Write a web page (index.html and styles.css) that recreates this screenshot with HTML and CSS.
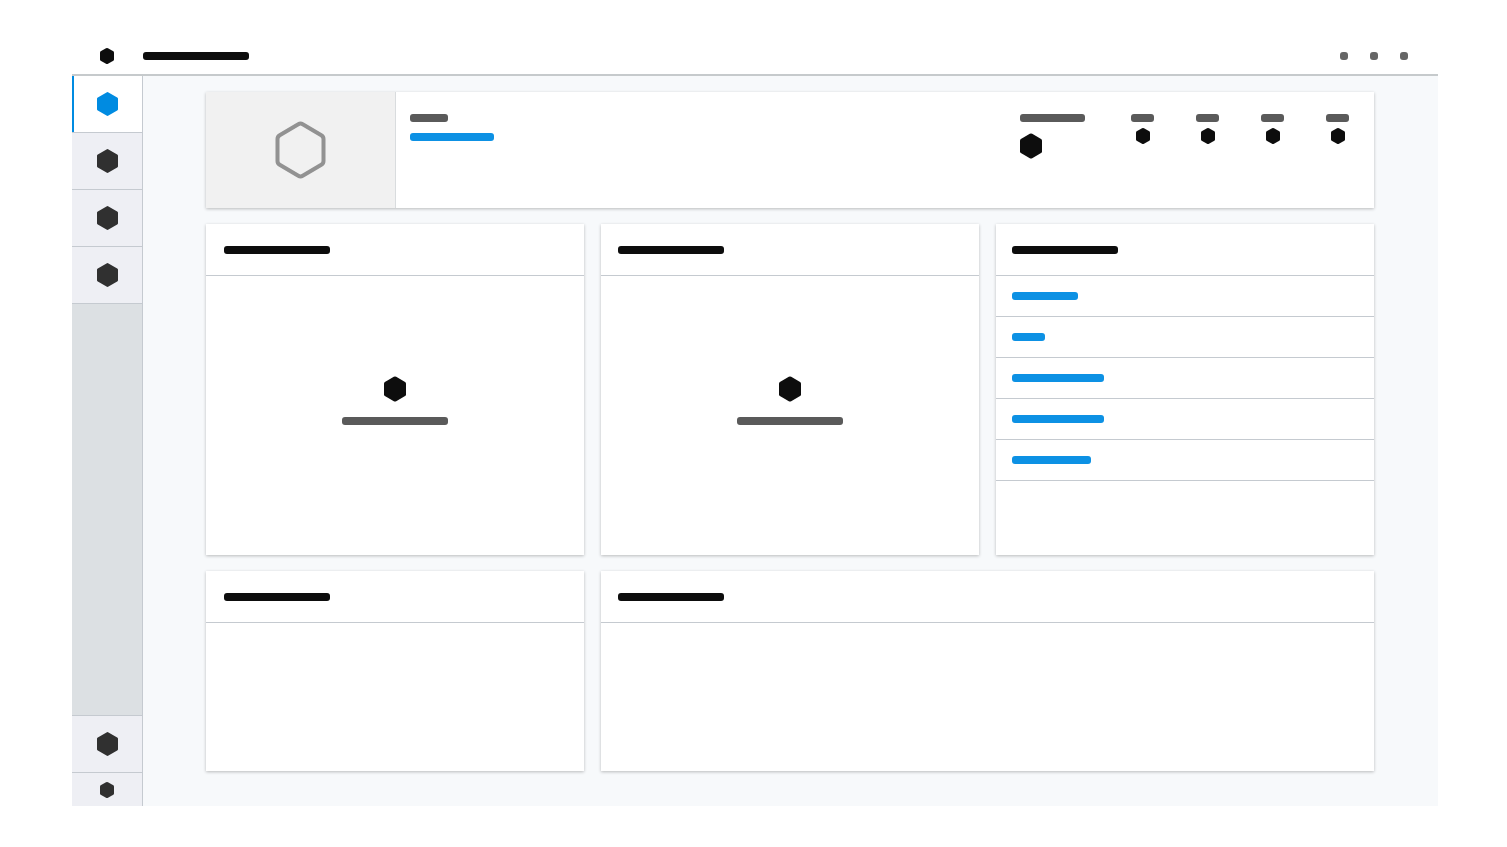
FILE: index.html
```html
<!DOCTYPE html>
<html lang="en">
<head>
<meta charset="utf-8">
<title>Dashboard wireframe</title>
<meta name="viewport" content="width=device-width, initial-scale=1">
<link rel="stylesheet" href="styles.css">
</head>
<body>
<svg class="sprite" aria-hidden="true">
  <symbol id="hex-s" viewBox="0 0 14 16"><path d="M6 .3Q7-.2 8 .3L13.300 3.300Q14 3.700 14 4.600V11.400Q14 12.300 13.300 12.700L8 15.700Q7 16.200 6 15.700L.7 12.700Q0 12.300 0 11.400V4.600Q0 3.700.7 3.300Z"/></symbol>
  <symbol id="hex-m" viewBox="0 0 22 24"><path d="M10.500.4Q11.500-.2 12.500.4L21.200 5.400Q22 5.900 22 6.800V17.200Q22 18.100 21.200 18.600L12.500 23.600Q11.500 24.200 10.500 23.600L1.800 18.600Q1 18.100 1 17.200V6.800Q1 5.900 1.800 5.400Z"/></symbol>
  <symbol id="hex-l" viewBox="0 0 22 26"><path d="M9.800.8Q11 .1 12.200.8L21.100 6Q22 6.600 22 7.600V18.400Q22 19.400 21.100 20L12.200 25.200Q11 25.900 9.800 25.200L.9 20Q0 19.400 0 18.400V7.600Q0 6.600.9 6Z"/></symbol>
</svg>
<div class="app">
  <header class="topbar">
    <a class="topbar-logo" href="#" aria-label="Home"><svg class="hex-s"><use href="#hex-s"/></svg></a>
    <span class="bar bar-title"></span>
    <div class="topbar-actions">
      <button class="dot" type="button" aria-label="Search"></button>
      <button class="dot" type="button" aria-label="Help"></button>
      <button class="dot" type="button" aria-label="Account"></button>
    </div>
  </header>
  <div class="workspace">
    <nav class="sidebar" aria-label="Main">
      <a class="side-item side-item-active" href="#" aria-label="Overview" aria-current="page"><svg class="hex-m"><use href="#hex-m"/></svg></a>
      <a class="side-item" href="#" aria-label="Section 2"><svg class="hex-m"><use href="#hex-m"/></svg></a>
      <a class="side-item" href="#" aria-label="Section 3"><svg class="hex-m"><use href="#hex-m"/></svg></a>
      <a class="side-item" href="#" aria-label="Section 4"><svg class="hex-m"><use href="#hex-m"/></svg></a>
      <div class="side-fill"></div>
      <a class="side-item" href="#" aria-label="Settings"><svg class="hex-m"><use href="#hex-m"/></svg></a>
      <button class="side-toggle" type="button" aria-label="Collapse"><svg class="hex-s"><use href="#hex-s"/></svg></button>
    </nav>
    <main class="content">
      <section class="card summary">
        <div class="summary-media">
          <svg class="hex-outline" viewBox="0 0 51 58"><path d="M23.300 3.200Q25.500 1.900 27.700 3.200L46.300 14.200Q48.500 15.500 48.500 18V40Q48.500 42.500 46.300 43.800L27.700 54.800Q25.500 56.100 23.300 54.800L4.700 43.800Q2.500 42.500 2.500 40V18Q2.500 15.500 4.700 14.200Z"/></svg>
        </div>
        <div class="summary-text">
          <span class="bar bar-grey w-38"></span>
          <a class="bar bar-link w-84" href="#" aria-label="Details"></a>
        </div>
        <div class="summary-status">
          <span class="bar bar-grey w-65"></span>
          <svg class="hex-l"><use href="#hex-l"/></svg>
        </div>
        <div class="metrics">
          <div class="metric"><span class="bar bar-grey w-23"></span><svg class="hex-s"><use href="#hex-s"/></svg></div>
          <div class="metric"><span class="bar bar-grey w-23"></span><svg class="hex-s"><use href="#hex-s"/></svg></div>
          <div class="metric"><span class="bar bar-grey w-23"></span><svg class="hex-s"><use href="#hex-s"/></svg></div>
          <div class="metric"><span class="bar bar-grey w-23"></span><svg class="hex-s"><use href="#hex-s"/></svg></div>
        </div>
      </section>
      <section class="card">
        <div class="card-head card-head-first"><span class="bar bar-title"></span></div>
        <div class="card-empty"><svg class="hex-l"><use href="#hex-l"/></svg><span class="bar bar-grey w-106"></span></div>
      </section>
      <section class="card">
        <div class="card-head"><span class="bar bar-title"></span></div>
        <div class="card-empty"><svg class="hex-l"><use href="#hex-l"/></svg><span class="bar bar-grey w-106"></span></div>
      </section>
      <section class="card">
        <div class="card-head card-head-list"><span class="bar bar-title"></span></div>
        <ul class="links">
          <li class="links-row"><a class="bar bar-link w-66" href="#" aria-label="Link 1"></a></li>
          <li class="links-row"><a class="bar bar-link w-33" href="#" aria-label="Link 2"></a></li>
          <li class="links-row"><a class="bar bar-link w-92" href="#" aria-label="Link 3"></a></li>
          <li class="links-row"><a class="bar bar-link w-92" href="#" aria-label="Link 4"></a></li>
          <li class="links-row"><a class="bar bar-link w-79" href="#" aria-label="Link 5"></a></li>
        </ul>
      </section>
      <section class="card">
        <div class="card-head card-head-first"><span class="bar bar-title"></span></div>
      </section>
      <section class="card card-wide">
        <div class="card-head"><span class="bar bar-title"></span></div>
      </section>
    </main>
  </div>
</div>
</body>
</html>
```
FILE: styles.css
```css
* { box-sizing: border-box; }

body {
  margin: 0;
  background: #fff;
  font-family: "Liberation Sans", sans-serif;
}

button {
  padding: 0;
  border: 0;
  cursor: pointer;
}

svg {
  display: block;
  flex: none;
  fill: currentColor;
}

.sprite { position: absolute; width: 0; height: 0; }
.hex-s { width: 14px; height: 16px; }
.hex-m { width: 22px; height: 24px; }
.hex-l { width: 22px; height: 26px; }

.app {
  display: flex;
  flex-direction: column;
  min-height: 100vh;
  padding: 38px 69px 41px 72px;
  color: #0d0d0d;
}

/* Placeholder text bars */
.bar {
  display: block;
  flex: none;
  height: 8px;
  border-radius: 3px;
}
.bar-title { width: 106px; background: #0d0d0d; }
.bar-grey { background: #5a5a5a; }
.bar-link { background: #0d91e4; }
.w-23 { width: 23px; }
.w-33 { width: 33px; }
.w-38 { width: 38px; }
.w-65 { width: 65px; }
.w-66 { width: 66px; }
.w-79 { width: 79px; }
.w-84 { width: 84px; }
.w-92 { width: 92px; }
.w-106 { width: 106px; }

/* Top bar */
.topbar {
  display: flex;
  align-items: center;
  height: 38px;
  border-bottom: 2px solid #c6cacc;
}
.topbar-logo {
  display: flex;
  justify-content: center;
  width: 70px;
  margin-right: 1px;
  color: inherit;
}
.topbar-actions {
  display: flex;
  gap: 22px;
  margin-left: auto;
  padding-right: 30px;
}
.dot {
  width: 8px;
  height: 8px;
  border-radius: 3px;
  background: #666;
}

/* Sidebar */
.workspace { display: flex; flex: 1; }
.sidebar {
  display: flex;
  flex: none;
  flex-direction: column;
  width: 71px;
  border-right: 1px solid #c5cad0;
  background: #eeeff4;
  color: #303030;
}
.side-item {
  display: flex;
  align-items: center;
  justify-content: center;
  height: 57px;
  border-bottom: 1px solid #c5cad0;
  color: inherit;
}
.side-item-active {
  background: linear-gradient(90deg, #008be1 2px, #fff 2px) padding-box;
  color: #008be1;
}
.side-fill {
  flex: 1;
  border-bottom: 1px solid #c5cad0;
  background: #dce0e3;
}
.side-toggle {
  display: flex;
  align-items: center;
  justify-content: center;
  height: 33px;
  background: none;
  color: inherit;
}

/* Dashboard grid */
.content {
  display: grid;
  flex: 1;
  grid-template-columns: repeat(3, minmax(0, 1fr));
  grid-template-rows: auto 1fr minmax(200px, auto);
  gap: 16px 17px;
  padding: 16px 64px 35px 63px;
  background: #f7f9fb;
}
.card {
  display: flex;
  flex-direction: column;
  background: #fff;
  box-shadow: 0 1px 3px rgba(0, 0, 0, .25);
}
.card-wide { grid-column: span 2; }
.card-head {
  display: flex;
  align-items: center;
  height: 52px;
  padding: 0 17px;
  border-bottom: 1px solid #c5cad0;
}
.card-head-first { padding: 0 18px; }
.card-head-list { padding: 0 16px; }
.card-empty {
  display: flex;
  flex: 1;
  flex-direction: column;
  align-items: center;
  justify-content: center;
  gap: 15px;
  padding-bottom: 30px;
}

/* Summary card */
.summary {
  flex-direction: row;
  grid-column: 1 / -1;
  min-height: 116px;
}
.summary-media {
  display: flex;
  align-items: center;
  justify-content: center;
  width: 190px;
  border-right: 1px solid #d9dcde;
  background: #f1f1f1;
}
.hex-outline {
  width: 51px;
  height: 58px;
  fill: none;
  stroke: #929292;
  stroke-width: 4;
}
.summary-text {
  display: flex;
  flex: 1;
  flex-direction: column;
  gap: 11px;
  padding: 22px 14px;
}
.summary-status {
  display: flex;
  flex-direction: column;
  gap: 11px;
  padding-top: 22px;
}
.metrics {
  display: flex;
  gap: 42px;
  padding: 22px 25px 0 46px;
}
.metric {
  display: flex;
  flex-direction: column;
  align-items: center;
  gap: 6px;
}

/* Link list */
.links {
  margin: 0;
  padding: 0;
  list-style: none;
}
.links-row {
  display: flex;
  align-items: center;
  height: 41px;
  padding: 0 16px;
  border-bottom: 1px solid #c5cad0;
}
```
